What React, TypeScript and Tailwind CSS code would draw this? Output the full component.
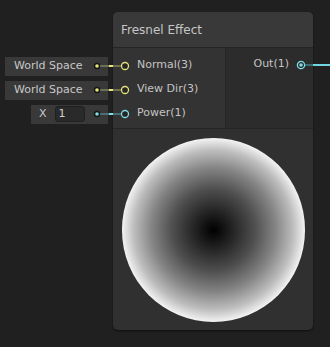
import React from 'react';

const font = { fontFamily: '"DejaVu Sans", "Liberation Sans", sans-serif' };

const inputs = [
  { label: 'Normal(3)', kind: 'space', color: '#e4e47a' },
  { label: 'View Dir(3)', kind: 'space', color: '#e4e47a' },
  { label: 'Power(1)', kind: 'value', color: '#7fdbe6' },
];

const Wire: React.FC<{ color: string; dim: string }> = ({ color, dim }) => (
  <svg width="40" height="24" viewBox="0 0 40 24" className="block">
    <line x1="9" y1="12" x2="31" y2="12" stroke={dim} strokeWidth="2" />
    <line x1="19" y1="12" x2="23" y2="12" stroke={color} strokeWidth="2" />
    <circle cx="7" cy="12" r="3.2" fill="#151515" />
    <circle cx="7" cy="12" r="1.8" fill={color} />
    <circle cx="35" cy="12" r="3.5" fill="#252525" stroke={color} strokeWidth="1.3" />
  </svg>
);

export default function App() {
  return (
    <div className="relative w-[330px] h-[347px] bg-[#202020] overflow-hidden" style={font}>
      {/* node */}
      <div className="absolute left-[113px] top-[12px] w-[200px] h-[318px] flex flex-col rounded-[5px] bg-[#303030] shadow-[0_1px_2px_rgba(0,0,0,0.6)] overflow-hidden">
        <div className="h-[36px] shrink-0 bg-[#393939] border-b border-[#252525] flex items-center pl-[8px] text-[12px] text-[#c6c6c6]">
          Fresnel Effect
        </div>
        <div className="h-[81px] shrink-0 flex border-b border-[#252525]">
          <div className="w-[113px] bg-[#333333] border-r border-[#262626] pt-[5px]">
            {inputs.map((p) => (
              <div key={p.label} className="h-[24px] flex items-center pl-[24px] text-[11px] text-[#c4c4c4]">
                {p.label}
              </div>
            ))}
          </div>
          <div className="flex-1 bg-[#2c2c2c] pt-[4px]">
            <div className="h-[24px] flex items-center justify-end pr-[24px] text-[11px] text-[#c4c4c4]">
              Out(1)
            </div>
          </div>
        </div>
        <div className="flex-1 flex items-center justify-center">
          <div className="w-[183px] h-[184px] rounded-full bg-[radial-gradient(circle_closest-side,#000000_0%,#262626_22%,#4f4f4f_45%,#858585_68%,#bdbdbd_87%,#f2f2f2_100%)]" />
        </div>
      </div>

      {/* input widgets */}
      <div className="absolute left-[5px] top-[54px] w-[103px] flex flex-col">
        {inputs.map((p) =>
          p.kind === 'space' ? (
            <div key={p.label} className="h-[24px] flex items-center">
              <div className="w-full h-[19px] bg-[#393939] flex items-center pl-[9px] text-[11px] text-[#c8c8c8]">
                World Space
              </div>
            </div>
          ) : (
            <div key={p.label} className="h-[24px] flex items-center justify-end">
              <div className="w-[77px] h-[19px] bg-[#393939] flex items-center pl-[8px] text-[11px] text-[#c8c8c8]">
                <span>X</span>
                <span className="ml-[8px] w-[30px] h-[16px] rounded-[3px] bg-[#2a2a2a] border border-[#202020] flex items-center pl-[3px] text-[#d0d0d0]">
                  1
                </span>
              </div>
            </div>
          )
        )}
      </div>

      {/* wires */}
      <div className="absolute left-[90px] top-[54px] flex flex-col">
        <Wire color="#e4e47a" dim="#6e6e52" />
        <Wire color="#e4e47a" dim="#6e6e52" />
        <Wire color="#7fdbe6" dim="#4a6e72" />
      </div>

      {/* output wire */}
      <svg width="40" height="12" viewBox="0 0 40 12" className="absolute left-[294px] top-[59px]">
        <line x1="11" y1="6" x2="19" y2="6" stroke="#3f6a6d" strokeWidth="2" />
        <line x1="19" y1="6" x2="40" y2="6" stroke="#6fd6e2" strokeWidth="2" />
        <circle cx="7" cy="6" r="3.6" fill="#252525" stroke="#7fdbe6" strokeWidth="1.3" />
        <circle cx="7" cy="6" r="1.8" fill="#7fdbe6" />
      </svg>
    </div>
  );
}
